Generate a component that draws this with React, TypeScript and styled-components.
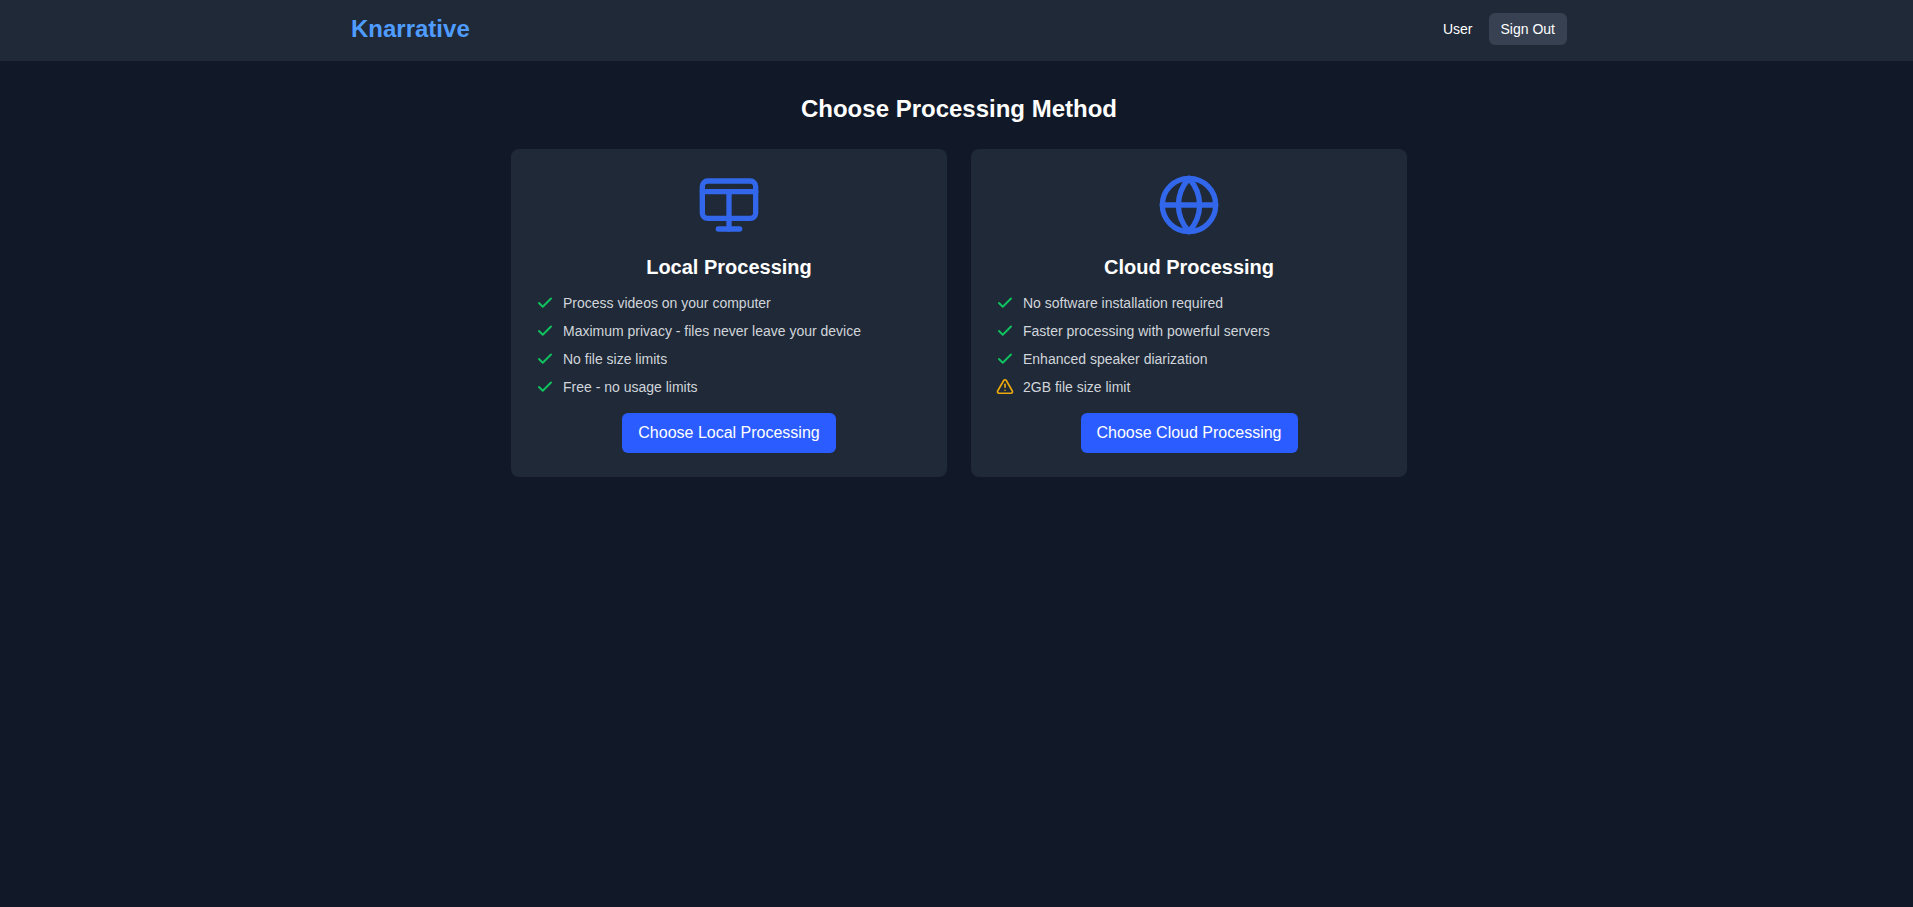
import React from "react";
import styled, { createGlobalStyle } from "styled-components";

const Global = createGlobalStyle`
  html, body { margin: 0; padding: 0; background: #111827; }
  body { font-family: "Liberation Sans", Arial, sans-serif; color: #fff; }
`;

const Page = styled.div`
  height: 907px;
  background: #111827;
  overflow: hidden;
`;

const Header = styled.header`
  height: 61px;
  box-sizing: border-box;
  background: #1f2937;
  padding: 0 0 3px 5px;
`;

const HeaderInner = styled.div`
  width: 1216px;
  height: 100%;
  margin: 0 auto;
  display: flex;
  align-items: center;
  justify-content: space-between;
`;

const Brand = styled.div`
  font-size: 24px;
  font-weight: 700;
  color: #4f9cff;
`;

const UserArea = styled.div`
  display: flex;
  align-items: center;
  gap: 16px;
`;

const UserName = styled.span`
  font-size: 14px;
`;

const SignOut = styled.button`
  height: 32px;
  padding: 0 12px;
  border: 0;
  border-radius: 6px;
  background: #374151;
  color: #fff;
  font: 14px "Liberation Sans", Arial, sans-serif;
`;

const Main = styled.main`
  padding: 32px 0 0 5px;
`;

const Title = styled.h1`
  margin: 0 0 24px;
  font-size: 24px;
  line-height: 32px;
  font-weight: 700;
  text-align: center;
  color: #fff;
`;

const Cards = styled.div`
  width: 896px;
  margin: 0 auto;
  display: grid;
  grid-template-columns: 1fr 1fr;
  gap: 24px;
`;

const Card = styled.section`
  background: #1f2937;
  border-radius: 8px;
  padding: 24px;
  display: flex;
  flex-direction: column;
  align-items: center;
`;

const BigIcon = styled.svg`
  width: 64px;
  height: 64px;
  fill: none;
  stroke: #3267ec;
  stroke-width: 2;
  stroke-linecap: round;
  stroke-linejoin: round;
  margin-bottom: 16px;
`;

const CardTitle = styled.h2`
  margin: 0 0 12px;
  font-size: 20px;
  line-height: 28px;
  font-weight: 700;
  color: #fff;
`;

const Features = styled.ul`
  list-style: none;
  margin: 0 0 16px;
  padding: 0 0 0 1px;
  width: 100%;
  box-sizing: border-box;
  display: flex;
  flex-direction: column;
  gap: 8px;
`;

const Feature = styled.li`
  display: flex;
  align-items: center;
  gap: 9px;
  height: 20px;
  font-size: 14px;
  line-height: 20px;
  color: #d1d5db;
`;

const SmallIcon = styled.svg<{ $color: string; $weight: number }>`
  width: 18px;
  height: 18px;
  flex: none;
  fill: none;
  stroke: ${(p) => p.$color};
  stroke-width: ${(p) => p.$weight};
  stroke-linecap: round;
  stroke-linejoin: round;
`;

const Choose = styled.button`
  height: 40px;
  padding: 0 16px;
  border: 0;
  border-radius: 6px;
  background: #2b5cff;
  color: #fff;
  font: 16px "Liberation Sans", Arial, sans-serif;
`;

const Check = () => (
  <SmallIcon $color="#0fc25f" $weight={2.6} viewBox="0 0 24 24" aria-hidden="true">
    <path d="M20 6 9 17l-5-5" />
  </SmallIcon>
);

const Warn = () => (
  <SmallIcon $color="#eaa90c" $weight={2.2} viewBox="0 0.7 24 24" aria-hidden="true">
    <path d="m21.73 18-8-14a2 2 0 0 0-3.48 0l-8 14A2 2 0 0 0 4 21h16a2 2 0 0 0 1.73-3" />
    <path d="M12 9v4" />
    <path d="M12 17h.01" />
  </SmallIcon>
);

const options = [
  {
    title: "Local Processing",
    button: "Choose Local Processing",
    icon: (
      <BigIcon viewBox="0 0 24 24" aria-hidden="true">
        <rect x="2" y="3" width="20" height="14" rx="2" />
        <path d="M2 7h20" />
        <path d="M12 7v14" />
        <path d="M8 21h8" />
      </BigIcon>
    ),
    features: [
      ["check", "Process videos on your computer"],
      ["check", "Maximum privacy - files never leave your device"],
      ["check", "No file size limits"],
      ["check", "Free - no usage limits"],
    ],
  },
  {
    title: "Cloud Processing",
    button: "Choose Cloud Processing",
    icon: (
      <BigIcon viewBox="0 0 24 24" aria-hidden="true">
        <circle cx="12" cy="12" r="10" />
        <path d="M2 12h20" />
        <path d="M12 2a15.3 15.3 0 0 1 4 10 15.3 15.3 0 0 1-4 10 15.3 15.3 0 0 1-4-10 15.3 15.3 0 0 1 4-10z" />
      </BigIcon>
    ),
    features: [
      ["check", "No software installation required"],
      ["check", "Faster processing with powerful servers"],
      ["check", "Enhanced speaker diarization"],
      ["warn", "2GB file size limit"],
    ],
  },
];

export default function App() {
  return (
    <Page>
      <Global />
      <Header>
        <HeaderInner>
          <Brand>Knarrative</Brand>
          <UserArea>
            <UserName>User</UserName>
            <SignOut>Sign Out</SignOut>
          </UserArea>
        </HeaderInner>
      </Header>
      <Main>
        <Title>Choose Processing Method</Title>
        <Cards>
          {options.map((o) => (
            <Card key={o.title}>
              {o.icon}
              <CardTitle>{o.title}</CardTitle>
              <Features>
                {o.features.map(([kind, text]) => (
                  <Feature key={text}>
                    {kind === "check" ? <Check /> : <Warn />}
                    {text}
                  </Feature>
                ))}
              </Features>
              <Choose>{o.button}</Choose>
            </Card>
          ))}
        </Cards>
      </Main>
    </Page>
  );
}
